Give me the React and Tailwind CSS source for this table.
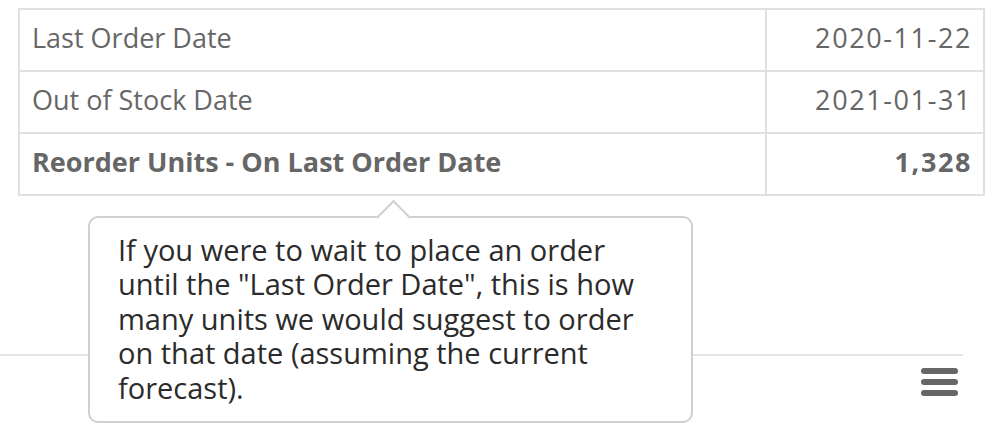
import React from "react";

const rows = [
    { label: "Last Order Date", value: "2020-11-22" },
    { label: "Out of Stock Date", value: "2021-01-31" },
    { label: "Reorder Units - On Last Order Date", value: "1,328", bold: true },
];

const App = () => {
    return (
        <div className="relative w-[1002px] h-[440px] bg-white overflow-hidden font-['Open_Sans',sans-serif]">
            {/* summary table */}
            <div className="pt-[8px] pl-[18px]">
                <table className="border-collapse w-[967px] text-[#666] text-[27px]">
                    <tbody>
                        {rows.map((row) => (
                            <tr key={row.label} className="h-[62px]">
                                <td className={`w-[747px] border-2 border-[#e0e0e0] pl-[12px] pb-[4px] ${row.bold ? "font-bold" : ""}`}>
                                    {row.label}
                                </td>
                                <td className={`border-2 border-[#e0e0e0] pr-[11px] pb-[4px] text-right tracking-[1.6px] ${row.bold ? "font-bold" : ""}`}>
                                    {row.value}
                                </td>
                            </tr>
                        ))}
                    </tbody>
                </table>
            </div>

            {/* footer bar */}
            <div className="mt-[158px] w-[963px] border-t-2 border-[#e6e6e6]"></div>
            <div className="flex justify-end pr-[44px] pt-[12px]">
                <div className="flex flex-col gap-[5px]">
                    <span className="block w-[37px] h-[6px] rounded-full bg-[#666]"></span>
                    <span className="block w-[37px] h-[6px] rounded-full bg-[#666]"></span>
                    <span className="block w-[37px] h-[6px] rounded-full bg-[#666]"></span>
                </div>
            </div>

            {/* tooltip */}
            <div className="absolute left-[88px] top-[216px] w-[605px] h-[207px] bg-white border-2 border-[#cfcfcf] rounded-[10px] px-[28px] py-[15px]">
                <div className="absolute -top-[13px] left-[291px] w-[25px] h-[25px] rotate-45 bg-white border-l-2 border-t-2 border-[#cfcfcf]"></div>
                <p className="relative text-[29px] leading-[34.4px] text-[#2b2b2b] whitespace-nowrap">
                    If you were to wait to place an order<br />
                    until the "Last Order Date", this is how<br />
                    many units we would suggest to order<br />
                    on that date (assuming the current<br />
                    forecast).
                </p>
            </div>
        </div>
    );
};

export default App;
